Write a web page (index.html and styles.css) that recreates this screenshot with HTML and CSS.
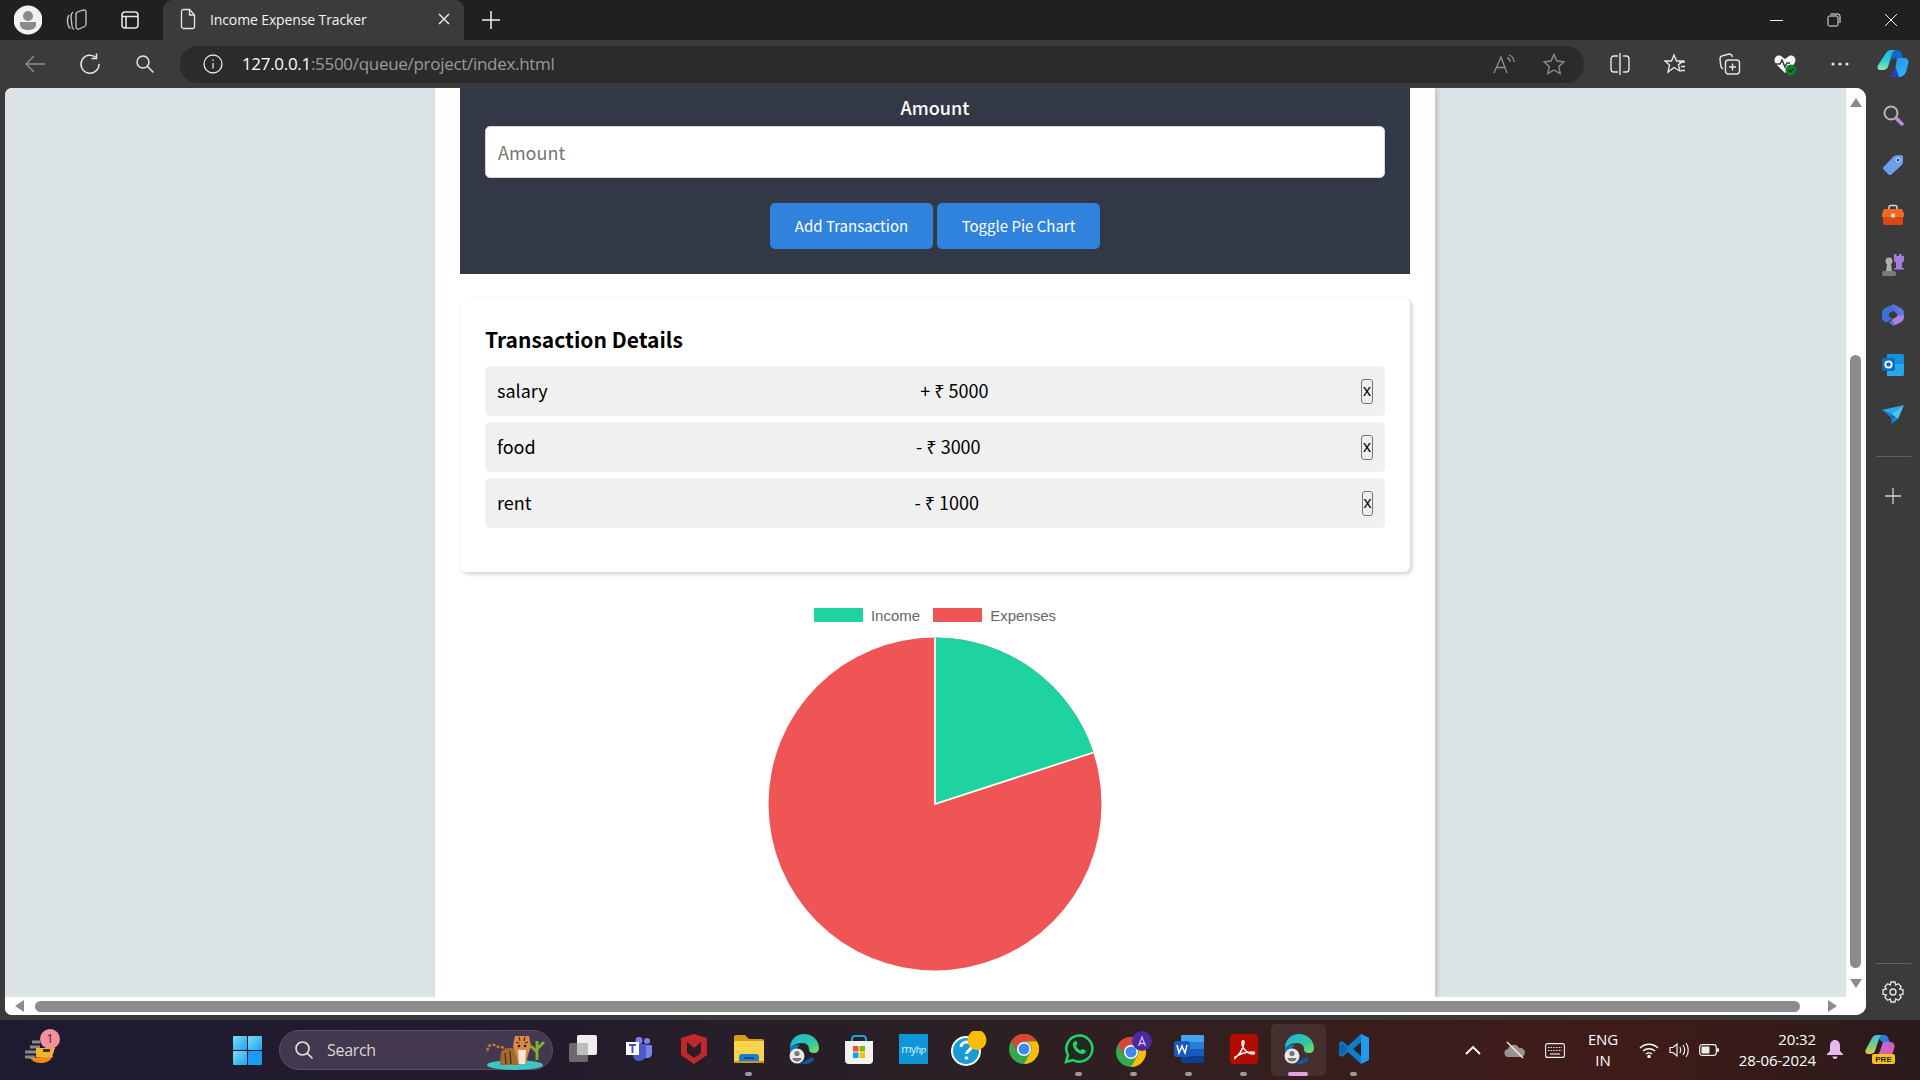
FILE: index.html
```html
<!DOCTYPE html>
<html lang="en">

<head>
    <meta charset="UTF-8">
    <title>Income Expense Tracker</title>
    <link rel="stylesheet" href="styles.css">
</head>

<body>

    <!-- Tab strip -->
    <div class="tabstrip">
        <div class="strip-btn avatar-slot">
            <svg width="28" height="30" viewBox="0 0 28 30"><circle cx="14" cy="15" r="14.500" fill="#f2f2f2"/><circle cx="14" cy="11" r="5" fill="#8a8a8a"/><path d="M6 17h16v3c0 3-4 5-8 5s-8-2-8-5z" fill="#8a8a8a"/></svg>
        </div>
        <div class="strip-btn workspaces">
            <svg width="24" height="24" viewBox="0 0 24 24" fill="none" stroke="#c8c8c8" stroke-width="1.300"><path d="M4 7c-1.500 2-2 4-1.500 7l1 4c.3 1 1 2 2 2.500"/><path d="M8 4C6.500 5 6 6.500 6 9l1 9c0 1.500 1 3 2 3.500"/><path d="M11 6c0-1 .5-1.500 1.500-2l6-2c1.500-.3 2.500.5 2.500 2v12c0 1-.5 2-1.500 2.500L14 21c-1.500.5-3-.5-3-2z"/></svg>
        </div>
        <div class="strip-btn vtabs">
            <svg width="20" height="20" viewBox="0 0 20 20" fill="none" stroke="#e4e4e4" stroke-width="1.600"><rect x="2" y="2" width="16" height="16" rx="3"/><path d="M2 6.500h16M6 6.500V18"/></svg>
        </div>
        <div class="tab">
            <svg width="18" height="22" viewBox="0 0 18 22" fill="none" stroke="#e6e6e6" stroke-width="1.300"><path d="M2.500 3.500a2 2 0 0 1 2-2h6l5 5.500v11.500a2 2 0 0 1-2 2h-9a2 2 0 0 1-2-2z"/><path d="M10.500 1.500v5.500h5"/></svg>
            <span class="tab-title">Income Expense Tracker</span>
            <svg class="tab-close" width="12" height="12" viewBox="0 0 12 12" stroke="#f0f0f0" stroke-width="1.400"><path d="M1 1l10 10M11 1L1 11"/></svg>
        </div>
        <svg class="new-tab" width="18" height="18" viewBox="0 0 18 18" stroke="#f0f0f0" stroke-width="1.500"><path d="M9 0v18M0 9h18"/></svg>
        <div class="window-btns">
            <svg width="14" height="14" viewBox="0 0 14 14" stroke="#f0f0f0" stroke-width="1"><path d="M0 7.500h13"/></svg>
            <svg width="14" height="14" viewBox="0 0 14 14" fill="none" stroke="#f0f0f0" stroke-width="1"><rect x="1" y="3" width="10" height="10" rx="1.500"/><path d="M3.500 1h7.500a2 2 0 0 1 2 2v7"/></svg>
            <svg width="14" height="14" viewBox="0 0 14 14" stroke="#f0f0f0" stroke-width="1"><path d="M1 1l12 12M13 1L1 13"/></svg>
        </div>
    </div>

    <!-- Address bar -->
    <div class="toolbar">
        <div class="tool-btn first">
            <svg width="22" height="20" viewBox="0 0 22 20" fill="none" stroke="#8b8b8b" stroke-width="1.500"><path d="M21 10H2M10 2l-8 8 8 8"/></svg>
        </div>
        <div class="tool-btn">
            <svg width="22" height="22" viewBox="0 0 22 22" fill="none" stroke="#e6e6e6" stroke-width="1.500"><path d="M17 4.500A9 9 0 1 0 20 11"/><path d="M17.500 0.500v5h-5"/></svg>
        </div>
        <div class="tool-btn">
            <svg width="20" height="20" viewBox="0 0 20 20" fill="none" stroke="#e6e6e6" stroke-width="1.500"><circle cx="8" cy="8" r="6"/><path d="M12.500 12.500l6 6"/></svg>
        </div>
        <div class="omnibox">
            <svg class="info" width="20" height="20" viewBox="0 0 20 20" fill="none" stroke="#e6e6e6" stroke-width="1.300"><circle cx="10" cy="10" r="9"/><path d="M10 9v5.500M10 5.500v1.500"/></svg>
            <span class="url"><span class="url-host">127.0.0.1</span>:5500/queue/project/index.html</span>
            <div class="omni-right">
                <svg width="22" height="22" viewBox="0 0 22 22" fill="none" stroke="#8e8e8e" stroke-width="1.300"><path d="M1 20L8 4l6 16M3.500 14.500h9"/><path d="M14 5c2 0 3 2 3 4M16 2c3 1 5 4 5 7"/></svg>
                <svg width="22" height="22" viewBox="0 0 22 22" fill="none" stroke="#8e8e8e" stroke-width="1.400"><path d="M11 1.500l3 6.500 7 .8-5.200 4.800 1.400 7L11 17l-6.200 3.600 1.400-7L1 8.800 8 8z"/></svg>
            </div>
        </div>
        <div class="tool-right">
            <div class="tool-icon"><svg width="20" height="22" viewBox="0 0 20 22" fill="none" stroke="#e6e6e6" stroke-width="1.400"><path d="M8 3H4a3 3 0 0 0-3 3v10a3 3 0 0 0 3 3h4M13 3h3a3 3 0 0 1 3 3v10a3 3 0 0 1-3 3h-3M10 0v22"/></svg></div>
            <div class="tool-icon"><svg width="22" height="22" viewBox="0 0 22 22" fill="none" stroke="#e6e6e6" stroke-width="1.400"><path d="M10 2l2.500 6H19l-4.500 3.800L16 18l-6-3.500L4 19l1.500-7L1 8h6.500z"/><path d="M15 9h6M17 13.500h4M17 17.500h4"/></svg></div>
            <div class="tool-icon"><svg width="22" height="22" viewBox="0 0 22 22" fill="none" stroke="#e6e6e6" stroke-width="1.400"><rect x="6.500" y="7" width="14" height="14" rx="3"/><path d="M13.500 10.500v7M10 14h7"/><path d="M4 16c-1.500-1-2-2-2.300-3.500L1 6c0-2 1-3 2.500-3.300L10 1c2 0 3 1 3.500 3"/></svg></div>
            <div class="tool-icon"><svg width="24" height="24" viewBox="0 0 24 24"><path d="M12 21L3 12c-4-5 1-10 5-8l4 3 4-3c4-2 9 3 5 8z" fill="#f4f4f4"/><path d="M1 12h6l2-4 3 7 2-4h3" fill="none" stroke="#3b3b3b" stroke-width="1.500"/><circle cx="18" cy="18" r="5.500" fill="#107c2c"/><path d="M15.500 18l2 2 3-3.500" fill="none" stroke="#0a3a16" stroke-width="1.300"/></svg></div>
            <div class="tool-icon"><svg width="18" height="4" viewBox="0 0 18 4" fill="#e6e6e6"><circle cx="2" cy="2" r="1.600"/><circle cx="9" cy="2" r="1.600"/><circle cx="16" cy="2" r="1.600"/></svg></div>
            <div class="tool-icon copilot-slot">
                <svg width="32" height="28" viewBox="0 0 32 28"><defs><linearGradient id="cpA" x1="0" y1="0" x2="0" y2="1"><stop offset="0" stop-color="#1fb6f0"/><stop offset=".55" stop-color="#2fd0d8"/><stop offset="1" stop-color="#8fe8a0"/></linearGradient><linearGradient id="cpB" x1="0" y1="0" x2="1" y2="1"><stop offset="0" stop-color="#1a8cf0"/><stop offset="1" stop-color="#38b8f8"/></linearGradient></defs><path d="M9 3c1-2 3-3 5-3h6c-3 0-4 2-5 4l-4 13c-1 2-3 3-5 3H3c-2 0-3-2-2.500-4z" fill="url(#cpA)"/><path d="M15 4c1-3 3-4 5-4 3 0 4 2 5 5l1 3h-8c-2 0-3 1-4 3z" fill="#1568c8"/><path d="M20 8h7c3 0 5 2 4.500 5l-2 7c-1 5-4 7-8 7H11c3 0 5-2 6-5l2-7z" fill="url(#cpB)"/><path d="M11 27c3 0 5-2 6-5l1.500-5 3.500 10z" fill="#2340c4"/></svg>
            </div>
        </div>
    </div>

    <div class="middle">
        <div class="viewport">
            <div class="view-top">
                <div class="page-area">
                    <div class="container">
                        <div class="form-panel">
                            <div class="form-label">Amount</div>
                            <input class="amount-input" type="text" placeholder="Amount">
                            <div class="form-actions">
                                <button class="btn">Add Transaction</button>
                                <button class="btn">Toggle Pie Chart</button>
                            </div>
                        </div>

                        <div class="details">
                            <h3>Transaction Details</h3>
                            <ul class="tx-list">
                                <li class="tx"><span>salary</span><span>+ ₹ 5000</span><button class="del">x</button></li>
                                <li class="tx"><span>food</span><span>- ₹ 3000</span><button class="del">x</button></li>
                                <li class="tx"><span>rent</span><span>- ₹ 1000</span><button class="del slim">x</button></li>
                            </ul>
                        </div>

                        <div class="chart">
                            <div class="legend">
                                <span class="swatch income"></span><span class="legend-text">Income</span>
                                <span class="swatch expenses"></span><span class="legend-text">Expenses</span>
                            </div>
                            <svg class="pie" width="336" height="336" viewBox="-168 -168 336 336">
                                <circle r="166.500" fill="#f05556"/>
                                <path d="M0 0V-166.500A166.500 166.500 0 0 1 158.400 -51.500Z" fill="#1fd3a1"/>
                                <path d="M0 -166.500V0L158.400 -51.500" fill="none" stroke="#fff" stroke-width="1.800"/>
                            </svg>
                        </div>
                    </div>
                </div>
                <div class="vscroll">
                    <span class="arrow-up"></span>
                    <div class="vthumb"></div>
                    <span class="arrow-down"></span>
                </div>
            </div>
            <div class="hscroll">
                <span class="arrow-left"></span>
                <div class="hthumb"></div>
                <span class="arrow-right"></span>
            </div>
        </div>

        <!-- Edge sidebar -->
        <div class="sidebar">
            <div class="side-slot"><svg width="22" height="22" viewBox="0 0 22 22"><circle cx="9" cy="9" r="6.500" fill="none" stroke="#b5b5b5" stroke-width="2"/><path d="M14 14l6 6" stroke="#b88de0" stroke-width="3.500" stroke-linecap="round"/></svg></div>
            <div class="side-slot"><svg width="22" height="22" viewBox="0 0 22 22"><path d="M1.500 13L12 2c1-.7 2-.8 3-.8h4.500c1 0 1.500.6 1.500 1.500V8c0 1-.3 2-1 2.700L9.500 20.500c-.8.8-2 .8-2.800 0L1.500 15.500c-.7-.7-.7-1.700 0-2.500z" fill="#6d9eeb"/><circle cx="16" cy="6" r="2" fill="#2b3a55" stroke="#dbe6fa"/></svg></div>
            <div class="side-slot"><svg width="22" height="22" viewBox="0 0 22 22"><path d="M7 6V3.500C7 2 8 1.500 9 1.500h4c1 0 2 .5 2 2V6" fill="none" stroke="#d8d8d8" stroke-width="1.500"/><path d="M2 5h18l2 5v3H0v-3z" fill="#f26a21"/><path d="M1 13h20v6c0 1-1 2-2 2H3c-1 0-2-1-2-2z" fill="#d9480f"/><rect x="9" y="9.500" width="4" height="4" rx="1" fill="#d8d8d8"/></svg></div>
            <div class="side-slot"><svg width="24" height="24" viewBox="0 0 24 24"><circle cx="8" cy="8" r="3.500" fill="#b0b0b0"/><path d="M6 11h4l1 7H5z" fill="#b0b0b0"/><rect x="1" y="18" width="14" height="5" rx="2" fill="#7b7b7b"/><path d="M13 1h2.500v2H18V1h2.500v2H23v5l-2 2v5h2v1.500H13V15h2v-5l-2-2z" fill="#a77ae0"/></svg></div>
            <div class="side-slot"><svg width="22" height="22" viewBox="0 0 22 22"><path d="M11 0l7 3.500c2.500 1 4 3 4 5.500v4c0 2.500-1.500 4.500-4 5.500L11 22l-4-4 5-3V7L7 4z" fill="#5f73e0"/><path d="M4 3.500L8 1.500l7 5.500-5 3v5l-5 3-1 .5C1.500 17.500 0 15.500 0 13V9c0-2.500 1.500-4.500 4-5.500z" fill="#3f6fd8"/><path d="M10 15l5-3 7-1v2c0 2.500-1.500 4.500-4 5.500L13 21z" fill="#b07fe0"/><path d="M11 7l4 2.500v3L11 15l-4-2.500v-3z" fill="#3b3b3b"/></svg></div>
            <div class="side-slot"><svg width="22" height="22" viewBox="0 0 22 22"><path d="M5 0h15a2 2 0 0 1 2 2v18a2 2 0 0 1-2 2H7l-2-3z" fill="#1490df"/><path d="M12 10h10v10a2 2 0 0 1-2 2H5v-6z" fill="#28a8ea"/><rect x="0" y="4" width="13" height="13" rx="2" fill="#0f6cbd"/><circle cx="6.500" cy="10.500" r="3.200" fill="none" stroke="#fff" stroke-width="1.800"/></svg></div>
            <div class="side-slot"><svg width="22" height="20" viewBox="0 0 22 20"><path d="M0 5l22-5-13 9z" fill="#2aa8f0"/><path d="M22 0l-13 9 7 5z" fill="#4cc2f7"/><path d="M9 9l3 2.500-3 7z" fill="#0f6cbd"/><path d="M0 5l9 4 1 4z" fill="#1b86d8"/><path d="M12 11.500l4 2.500-7 5z" fill="#1b86d8"/></svg></div>
            <div class="side-line"></div>
            <svg width="16" height="16" viewBox="0 0 16 16" stroke="#cfcfcf" stroke-width="1.300"><path d="M8 0v16M0 8h16"/></svg>
            <div class="side-bottom">
                <div class="side-line"></div>
                <svg width="22" height="22" viewBox="0 0 22 22" fill="none" stroke="#e6e6e6" stroke-width="1.300"><path d="M9 1h4l.7 3 2.600-1.300 2.800 2.900L17.700 8l3.300.8v4.400l-3.300.8 1.400 2.400-2.800 2.900-2.600-1.300L13 21H9l-.7-3-2.600 1.300-2.800-2.900L4.300 14 1 13.200V8.800L4.300 8 2.900 5.600l2.800-2.900L8.300 4z"/><circle cx="11" cy="11" r="3"/></svg>
            </div>
        </div>
    </div>

    <div class="toolbar-foot"></div>

    <!-- Windows taskbar -->
    <div class="taskbar">
        <div class="widget">
            <svg width="36" height="32" viewBox="0 0 36 32"><path d="M10 8h8M8 13h10M3 18h12M3 23h10" stroke="#8a8a8a" stroke-width="3" fill="none"/><path d="M8 24c3 4 7 5 12 5s9-3 11-7z" fill="#ef8a1d"/><path d="M14 14h19l-3 9H14z" fill="#f4b52c"/><rect x="21" y="15" width="7" height="3" fill="#3b3030"/></svg>
            <span class="badge">1</span>
        </div>
        <svg class="start" width="29" height="29" viewBox="0 0 29 29"><defs><linearGradient id="winA" x1="0" y1="0" x2="1" y2="1"><stop offset="0" stop-color="#7fdcf7"/><stop offset="1" stop-color="#1aa4f0"/></linearGradient></defs><rect width="14" height="14" rx="1" fill="url(#winA)"/><rect x="15" width="14" height="14" rx="1" fill="url(#winA)"/><rect y="15" width="14" height="14" rx="1" fill="url(#winA)"/><rect x="15" y="15" width="14" height="14" rx="1" fill="#1a9df0"/></svg>
        <div class="search">
            <svg width="20" height="20" viewBox="0 0 20 20" fill="none" stroke="#e8e8e8" stroke-width="1.600"><circle cx="8.500" cy="8.500" r="6.500"/><path d="M13 13l5.500 5.500"/></svg>
            <span class="search-text">Search</span>
            <svg class="tiger" width="64" height="38" viewBox="0 0 64 38"><ellipse cx="30" cy="33" rx="28" ry="5" fill="#3fc6c0"/><path d="M3 19c-2-5 4-8 8-5 3 2 7 0 10 3" fill="none" stroke="#c9762c" stroke-width="2.500" stroke-dasharray="3 1.500"/><path d="M16 20c4-4 10-5 15-3l3 16H15z" fill="#a5682f"/><path d="M20 21l1 11M25 19l1 13" stroke="#4a2c14" stroke-width="1.200"/><path d="M30 4h14l2 10-3 9-2 9h-8l-2-9-3-9z" fill="#d98a45"/><path d="M33 18h8l-1 14h-6z" fill="#f2e8dc"/><path d="M34 5l1 4M40 5l-1 4M31 10l3 1M43 10l-3 1" stroke="#4a2c14" stroke-width="1.200"/><circle cx="34" cy="14" r="1.300" fill="#222"/><circle cx="40" cy="14" r="1.300" fill="#222"/><path d="M52 28V9M52 20l-6-6M52 17l7-7" stroke="#7fb32d" stroke-width="2.800" fill="none"/></svg>
        </div>
        <div class="apps">
            <div class="app"><svg width="30" height="28" viewBox="0 0 30 28"><rect x="0" y="8" width="19" height="19" rx="2" fill="#6b6b6b"/><rect x="8" y="0" width="20" height="20" rx="2" fill="#efefef"/><rect x="8" y="8" width="11" height="12" fill="#bdbdbd"/></svg></div>
            <div class="app"><svg width="26" height="24" viewBox="0 0 26 24"><circle cx="21" cy="4" r="3" fill="#7b83eb"/><path d="M16 8h9c1 0 1 1 1 1v7c0 3-2 5-5 5s-5-2-5-5z" fill="#7b83eb"/><circle cx="13" cy="3.500" r="3.500" fill="#7b83eb"/><path d="M7 7h13v11c0 3-3 6-7 6s-6-3-6-6z" fill="#5059c9"/><rect x="0" y="5" width="13" height="13" fill="#fff"/><path d="M3 8h7M6.500 8v8" stroke="#4b53bc" stroke-width="2"/></svg></div>
            <div class="app"><svg width="26" height="30" viewBox="0 0 26 30"><path d="M0 4l13-4 13 4v17l-13 9-13-9z" fill="#c0282c"/><path d="M6 8l7 6 7-6v11l-7 5-7-5z" fill="#2a1e26"/></svg></div>
            <div class="app"><svg width="30" height="28" viewBox="0 0 30 28"><path d="M0 2a2 2 0 0 1 2-2h9l4 4h13a2 2 0 0 1 2 2v4H0z" fill="#d89c1c"/><rect y="6" width="30" height="22" rx="1" fill="#fbd44e"/><path d="M5 28v-6a3 3 0 0 1 3-3h14a3 3 0 0 1 3 3v6z" fill="#1a7fd0"/><rect x="10" y="22" width="10" height="2" fill="#0a4f8c"/><rect y="26" width="30" height="2" fill="#c9961a"/></svg><i class="dot"></i></div>
            <div class="app"><svg class="edge" width="30" height="30" viewBox="0 0 30 30"><defs><linearGradient id="edgeA" x1="0" y1="0" x2="1" y2="1"><stop offset="0" stop-color="#1bb4e8"/><stop offset=".6" stop-color="#33c6a0"/><stop offset="1" stop-color="#7fe05a"/></linearGradient></defs><path d="M1 14C1 6 7 0 15 0c8 0 15 6 15 14 0 3-2 5-5 5-4 0-5-2-5-4 0-3-2-6-7-6-6 0-10 3-12 5z" fill="url(#edgeA)"/><path d="M1 14c2-2 6-4 10-3-3 2-5 5-5 9 0 5 3 8 7 10C6 30 0 23 1 14z" fill="#1474c8"/><path d="M13 30c4 1 9-1 12-4l-2-3c-4 3-10 4-10 7z" fill="#0d5aa8"/><circle cx="8" cy="22" r="7.500" fill="#e9e9e9"/><circle cx="8" cy="19.500" r="2.600" fill="#777"/><path d="M3.500 24h9c0 2-2 3.500-4.500 3.500S3.500 26 3.500 24z" fill="#777"/></svg></div>
            <div class="app"><svg width="30" height="30" viewBox="0 0 30 30"><path d="M8 7V5a3 3 0 0 1 3-3h8a3 3 0 0 1 3 3v2" fill="none" stroke="#1ea0e8" stroke-width="2"/><path d="M1 7h28v19a4 4 0 0 1-4 4H5a4 4 0 0 1-4-4z" fill="#f2f2f2"/><rect x="9" y="12" width="5.500" height="5.500" fill="#f25022"/><rect x="15.500" y="12" width="5.500" height="5.500" fill="#7fba00"/><rect x="9" y="18.500" width="5.500" height="5.500" fill="#00a4ef"/><rect x="15.500" y="18.500" width="5.500" height="5.500" fill="#ffb900"/></svg></div>
            <div class="app"><div class="myhp">my<em>hp</em></div></div>
            <div class="app"><svg width="36" height="36" viewBox="0 0 36 36"><circle cx="15" cy="20" r="14" fill="#1a9ad6" stroke="#fff" stroke-width="2"/><path d="M10 16c0-3 2.500-5 5.500-5s5 2 5 4.500c0 3.500-5 4-5 7.500" fill="none" stroke="#fff" stroke-width="3"/><circle cx="15.500" cy="27" r="1.800" fill="#fff"/><ellipse cx="26" cy="9" rx="9.500" ry="10" fill="#fbbc05"/></svg></div>
            <div class="app"><svg width="30" height="30" viewBox="0 0 30 30"><circle cx="15" cy="15" r="15" fill="#34a853"/><path d="M15 0a15 15 0 0 1 13 7.500H15a7.500 7.500 0 0 0-6.500 11.300L2 7.500A15 15 0 0 1 15 0z" fill="#db4437"/><path d="M28 7.500A15 15 0 0 1 15 30l6.500-11.200A7.500 7.500 0 0 0 15 7.500z" fill="#fbbc05"/><circle cx="15" cy="15" r="7" fill="#fff"/><circle cx="15" cy="15" r="5.500" fill="#4285f4"/></svg></div>
            <div class="app"><svg width="30" height="30" viewBox="0 0 30 30"><path d="M2 28l2-7A13 13 0 1 1 9 26z" fill="#1f2a20" stroke="#25d366" stroke-width="2.500"/><path d="M10 8c-2 2-1 6 2 9s7 4 9 2c1-1 1-2 0-3l-3-1-1.500 1.500c-2-1-3.500-2.500-4.500-4.500L13.500 10l-1-3c-1-.500-1.500 0-2.500 1z" fill="#25d366"/></svg><i class="dot"></i></div>
            <div class="app"><svg width="36" height="36" viewBox="0 0 36 36"><g transform="translate(0 6)"><circle cx="15" cy="15" r="15" fill="#34a853"/><path d="M15 0a15 15 0 0 1 13 7.500H15a7.500 7.500 0 0 0-6.500 11.300L2 7.500A15 15 0 0 1 15 0z" fill="#db4437"/><path d="M28 7.500A15 15 0 0 1 15 30l6.500-11.200A7.500 7.500 0 0 0 15 7.500z" fill="#fbbc05"/><circle cx="15" cy="15" r="7" fill="#fff"/><circle cx="15" cy="15" r="5.500" fill="#4285f4"/></g><circle cx="26" cy="10" r="10" fill="#4a2a9c"/><path d="M22.500 15l3.500-9 3.500 9M23.500 12.500h5" fill="none" stroke="#c9b8f0" stroke-width="1.300"/></svg><i class="dot"></i></div>
            <div class="app"><svg width="30" height="28" viewBox="0 0 30 28"><rect x="7" y="0" width="23" height="7" rx="1" fill="#41a5ee"/><rect x="7" y="7" width="23" height="7" fill="#2b7cd3"/><rect x="7" y="14" width="23" height="7" fill="#185abd"/><rect x="7" y="21" width="23" height="7" rx="1" fill="#103f91"/><rect x="0" y="6" width="16" height="16" rx="2" fill="#185abd"/><path d="M3 10l2 8 3-7 3 7 2-8" fill="none" stroke="#fff" stroke-width="1.500"/></svg><i class="dot"></i></div>
            <div class="app"><svg width="28" height="30" viewBox="0 0 28 30"><rect width="28" height="30" rx="4" fill="#b30b00"/><path d="M5 23c4-1 8-8 9-14 .5-3-2-3-2 0 0 6 6 11 11 11 2 0 2-2 0-2-5 0-14 1-18 6z" fill="none" stroke="#fff" stroke-width="1.500"/></svg><i class="dot"></i></div>
            <div class="app current"><svg class="edge" width="30" height="30" viewBox="0 0 30 30"><path d="M1 14C1 6 7 0 15 0c8 0 15 6 15 14 0 3-2 5-5 5-4 0-5-2-5-4 0-3-2-6-7-6-6 0-10 3-12 5z" fill="url(#edgeA)"/><path d="M1 14c2-2 6-4 10-3-3 2-5 5-5 9 0 5 3 8 7 10C6 30 0 23 1 14z" fill="#1474c8"/><path d="M13 30c4 1 9-1 12-4l-2-3c-4 3-10 4-10 7z" fill="#0d5aa8"/><circle cx="8" cy="22" r="7.500" fill="#e9e9e9"/><circle cx="8" cy="19.500" r="2.600" fill="#777"/><path d="M3.500 24h9c0 2-2 3.500-4.500 3.500S3.500 26 3.500 24z" fill="#777"/></svg><i class="dot wide"></i></div>
            <div class="app"><svg width="30" height="30" viewBox="0 0 30 30"><path d="M22 0l8 4v22l-8 4-13-12-6 5-3-2v-12l3-2 6 5z" fill="#0f7ec8"/><path d="M22 8l-8 7 8 7z" fill="#2b2028"/><path d="M22 0l8 4v22l-8 4z" fill="#1f9cf0"/><path d="M3 9l6 6-6 6-3-2v-8z" fill="#0a66a8"/></svg><i class="dot"></i></div>
        </div>
        <div class="tray">
            <svg class="chev" width="16" height="10" viewBox="0 0 16 10" fill="none" stroke="#fff" stroke-width="1.800"><path d="M1 9l7-7 7 7"/></svg>
            <svg class="cloud" width="22" height="18" viewBox="0 0 22 18"><path d="M5 16a4 4 0 0 1-1-8 6 6 0 0 1 11-1 4.500 4.500 0 0 1 2.500 9z" fill="#9a9390"/><path d="M3 1l16 16" stroke="#eee" stroke-width="1.500"/></svg>
            <svg class="kbd" width="20" height="15" viewBox="0 0 20 15" fill="none" stroke="#eee" stroke-width="1.100"><rect x=".6" y=".6" width="18.800" height="13.800" rx="2"/><path d="M3 4.500h14M3 7.500h14" stroke-dasharray="1.500 1.200"/><path d="M5 11h10"/></svg>
            <div class="lang">ENG<br>IN</div>
            <svg class="wifi" width="20" height="16" viewBox="0 0 20 16" fill="none" stroke="#fff" stroke-width="1.400"><path d="M1 6c5-5 13-5 18 0M4 9c3.500-3 8.500-3 12 0M7 12c2-1.500 4-1.500 6 0"/><circle cx="10" cy="14.500" r="1" fill="#fff"/></svg>
            <svg class="sound" width="20" height="16" viewBox="0 0 20 16" fill="none" stroke="#eee" stroke-width="1.200"><path d="M1 5.500h3L8 2v12l-4-3.500H1z"/><path d="M11 5c1 2 1 4 0 6M14 3c2 3 2 7 0 10M17 1c3 4 3 10 0 14"/></svg>
            <svg class="batt" width="20" height="12" viewBox="0 0 20 12"><rect x=".7" y=".7" width="16.600" height="10.600" rx="2.500" fill="none" stroke="#eee" stroke-width="1.200"/><rect x="2.500" y="2.500" width="8" height="7" rx="1" fill="#eee"/><rect x="18" y="4" width="2" height="4" rx="1" fill="#eee"/></svg>
            <div class="clock">20:32<br>28-06-2024</div>
            <svg class="bell" width="16" height="20" viewBox="0 0 16 20"><path d="M8 0c3 0 5 2.500 5 6v5l3 3v1H0v-1l3-3V6c0-3.500 2-6 5-6z" fill="#e8b8ee"/><path d="M5.500 16.500h5c0 1.500-1 2.500-2.500 2.500s-2.500-1-2.500-2.500z" fill="#e8b8ee"/></svg>
            <svg class="pre" width="30" height="30" viewBox="0 0 30 30"><defs><linearGradient id="preA" x1="0" y1="0" x2="0" y2="1"><stop offset="0" stop-color="#3fc0e8"/><stop offset=".55" stop-color="#6cd080"/><stop offset="1" stop-color="#f5c43a"/></linearGradient><linearGradient id="preB" x1="0" y1="0" x2="1" y2="1"><stop offset="0" stop-color="#a86ae8"/><stop offset="1" stop-color="#f05aa0"/></linearGradient></defs><path d="M7 3c1-2 3-3 5-3h7c-3 0-4 2-5 4l-4 12c-1 2-2 3-5 3H3c-2 0-3-2-2.500-4z" fill="url(#preA)"/><path d="M14 4c1-3 3-4 5-4 3 0 4 2 5 5l1 2h-8z" fill="#2a7fd8"/><path d="M18 7h7c3 0 5 2 4.500 5L27 20H10c2 0 4-1 5-4z" fill="url(#preB)"/><rect x="7" y="19" width="23" height="10" rx="2" fill="#f5c21b"/><text x="18.500" y="27" class="pre-text">PRE</text></svg>
        </div>
    </div>

</body>

</html>
```

FILE: styles.css
```css
* {
    box-sizing: border-box;
}

html,
body {
    margin: 0;
    height: 100%;
    overflow: hidden;
}

body {
    width: 1920px;
    height: 1080px;
    display: flex;
    flex-direction: column;
    background: #3b3b3b;
    font-family: "Noto Sans CJK SC", "Noto Sans", sans-serif;
}

/* browser chrome */

.tabstrip {
    height: 40px;
    background: #202020;
    display: flex;
    align-items: center;
}

.strip-btn {
    display: flex;
    justify-content: center;
    align-items: center;
}

.avatar-slot {
    width: 28px;
    margin-left: 14px;
}

.workspaces {
    width: 24px;
    margin-left: 23px;
}

.vtabs {
    width: 20px;
    margin-left: 31px;
}

.tab {
    width: 301px;
    height: 40px;
    margin-left: 23px;
    background: #3b3b3b;
    border-radius: 9px 9px 0 0;
    display: flex;
    align-items: center;
    padding: 0 14px 2px 16px;
    color: #f2f2f2;
}

.tab-title {
    margin-left: 13px;
    font-family: "Open Sans", sans-serif;
    font-size: 14px;
    letter-spacing: -0.12px;
}

.tab-close {
    margin-left: auto;
}

.new-tab {
    margin-left: 18px;
}

.window-btns {
    margin-left: auto;
    margin-right: 22px;
    display: flex;
    gap: 43px;
}

.toolbar {
    height: 48px;
    display: flex;
    align-items: center;
}

.tool-btn {
    width: 55px;
    display: flex;
    justify-content: center;
}

.tool-btn.first {
    margin-left: 8px;
}

.omnibox {
    width: 1405px;
    height: 37px;
    margin-left: 7px;
    background: #2b2b2b;
    border-radius: 18px;
    display: flex;
    align-items: center;
    padding-left: 23px;
}

.info {
    flex: none;
}

.url {
    margin-left: 19px;
    margin-bottom: 2px;
    font-family: "Open Sans", sans-serif;
    font-size: 17px;
    letter-spacing: -0.3px;
    color: #9a9a9a;
}

.url-host {
    color: #fff;
}

.omni-right {
    margin-left: auto;
    margin-right: 19px;
    display: flex;
    gap: 28px;
}

.tool-right {
    display: flex;
    margin-left: 8px;
    align-items: center;
}

.tool-icon {
    width: 55px;
    display: flex;
    justify-content: center;
}

.copilot-slot {
    margin-left: -2px;
}

.middle {
    height: 927px;
    display: flex;
}

.viewport {
    width: 1861px;
    margin-left: 5px;
    border-radius: 7px 10px 10px 7px;
    overflow: hidden;
    display: flex;
    flex-direction: column;
    background: #fff;
}

.view-top {
    height: 909px;
    display: flex;
}

.page-area {
    width: 1841px;
    background: #dde4e7;
    overflow: hidden;
}

/* scrollbars */

.vscroll {
    width: 20px;
    background: #fff;
    display: flex;
    flex-direction: column;
    align-items: center;
    padding-top: 10px;
}

.arrow-up,
.arrow-down {
    width: 0;
    height: 0;
    border-left: 6px solid transparent;
    border-right: 6px solid transparent;
}

.arrow-up {
    border-bottom: 9px solid #8c8c8c;
}

.arrow-down {
    margin-top: 11px;
    border-top: 9px solid #8c8c8c;
}

.vthumb {
    width: 11px;
    height: 613px;
    margin-top: 248px;
    margin-right: 1px;
    background: #8c8c8c;
    border-radius: 6px;
}

.hscroll {
    height: 18px;
    background: #fff;
    display: flex;
    align-items: center;
    padding-left: 10px;
}

.arrow-left,
.arrow-right {
    width: 0;
    height: 0;
    border-top: 6px solid transparent;
    border-bottom: 6px solid transparent;
}

.arrow-left {
    border-right: 9px solid #8c8c8c;
}

.arrow-right {
    margin-left: 28px;
    border-left: 9px solid #8c8c8c;
}

.hthumb {
    width: 1765px;
    height: 11px;
    margin-left: 11px;
    background: #8c8c8c;
    border-radius: 6px;
}

/* page */

.container {
    width: 1000px;
    height: 100%;
    margin-left: 430px;
    padding: 0 25px;
    background: #fff;
    box-shadow: 2px 0 5px rgba(0, 0, 0, 0.18);
}

.form-panel {
    height: 186px;
    background: #323845;
    padding: 8px 25px 0;
    text-align: center;
}

.form-label {
    height: 30px;
    line-height: 22px;
    color: #fff;
    font-size: 18px;
    font-weight: 500;
}

.amount-input {
    display: block;
    width: 100%;
    height: 52px;
    padding: 0 12px;
    border: 1px solid #d5d5d5;
    border-radius: 5px;
    background: #fff;
    font-family: inherit;
    font-size: 18px;
    outline: none;
}

.amount-input::placeholder {
    color: #757575;
}

.form-actions {
    margin-top: 25px;
    display: flex;
    justify-content: center;
    gap: 4px;
}

.btn {
    width: 163px;
    height: 46px;
    padding: 0 0 2px;
    border: 0;
    border-radius: 5px;
    background: #2f83dd;
    color: #fff;
    font-family: inherit;
    font-size: 15px;
    font-weight: 400;
}

.details {
    height: 274px;
    margin-top: 24px;
    padding: 27px 25px 0;
    border-radius: 6px;
    background: #fff;
    box-shadow: 2px 2px 4px rgba(0, 0, 0, 0.2);
}

.details h3 {
    margin: 0 0 12px;
    height: 29px;
    line-height: 29px;
    font-size: 21px;
    font-weight: 700;
    color: #000;
}

.tx-list {
    list-style: none;
    margin: 0;
    padding: 0;
}

.tx {
    height: 50px;
    margin-bottom: 6px;
    padding: 0 12px;
    background: #f0f0f0;
    border-radius: 5px;
    display: flex;
    justify-content: space-between;
    align-items: center;
    font-size: 18px;
    color: #000;
}

.tx span {
    padding-bottom: 2px;
}

.del {
    width: 12px;
    height: 25px;
    padding: 0;
    border: 1px solid #767676;
    border-radius: 3px;
    background: #efefef;
    font-family: "Liberation Sans", sans-serif;
    font-size: 16px;
    color: #000;
}

.del.slim {
    width: 11px;
}

.chart {
    display: flex;
    flex-direction: column;
    align-items: center;
}

.legend {
    height: 20px;
    margin-top: 33px;
    display: flex;
    align-items: center;
    font-family: "Liberation Sans", sans-serif;
    font-size: 15px;
    color: #666;
}

.swatch {
    width: 49px;
    height: 14px;
    margin-right: 8px;
}

.swatch.income {
    background: #1fd3a1;
}

.swatch.expenses {
    background: #f05556;
}

.legend-text {
    margin-right: 13px;
}

.legend-text:last-child {
    margin-right: 0;
}

.pie {
    margin-top: 11px;
    display: block;
}

/* sidebar */

.sidebar {
    width: 54px;
    display: flex;
    flex-direction: column;
    align-items: center;
    padding-top: 2px;
}

.side-slot {
    height: 50px;
    flex: none;
    display: flex;
    align-items: center;
}

.side-line {
    width: 35px;
    height: 1px;
    background: #5f5f5f;
    margin: 16px 0 31px;
}

.side-bottom {
    margin-top: auto;
    margin-bottom: 12px;
    display: flex;
    flex-direction: column;
    align-items: center;
}

.side-bottom .side-line {
    margin: 0 0 17px;
}

.toolbar-foot {
    height: 5px;
    background: #3b3b3b;
}

/* taskbar */

.taskbar {
    height: 60px;
    background: linear-gradient(90deg, #1e1a30 0%, #241c2c 30%, #2b2024 50%, #3c1d1c 75%, #401c18 85%, #2a1a1c 100%);
    display: flex;
    align-items: center;
    color: #fff;
    font-family: "Open Sans", sans-serif;
}

.widget {
    width: 36px;
    margin-left: 22px;
    position: relative;
    display: flex;
}

.badge {
    position: absolute;
    top: -5px;
    right: -2px;
    width: 20px;
    height: 20px;
    border-radius: 50%;
    background: #f88f9d;
    color: #222;
    font-size: 12px;
    line-height: 20px;
    text-align: center;
}

.start {
    margin-left: 175px;
}

.search {
    width: 274px;
    height: 40px;
    margin-left: 17px;
    padding-left: 14px;
    background: #43384f;
    border: 1px solid #5a5064;
    border-radius: 20px;
    display: flex;
    align-items: center;
}

.search-text {
    margin-left: 13px;
    font-size: 16px;
    letter-spacing: -0.3px;
    color: #d8d8d8;
}

.tiger {
    margin-left: auto;
    margin-right: 3px;
    margin-top: 1px;
}

.apps {
    margin-left: 3px;
    display: flex;
}

.app {
    width: 55px;
    height: 52px;
    position: relative;
    display: flex;
    justify-content: center;
    align-items: center;
    padding-bottom: 2px;
}

.app.current {
    background: rgba(255, 255, 255, 0.08);
    border-radius: 5px;
}

.dot {
    position: absolute;
    bottom: 0;
    left: 24px;
    width: 7px;
    height: 4px;
    border-radius: 2px;
    background: #9a9a9a;
}

.dot.wide {
    left: 17px;
    width: 20px;
    background: #e0a3e6;
}

.myhp {
    width: 29px;
    height: 30px;
    background: #0f96d6;
    color: #d8f0fa;
    font-size: 11px;
    line-height: 30px;
    text-align: center;
    letter-spacing: -0.5px;
}

.myhp em {
    font-family: "Liberation Serif", serif;
}

.tray {
    margin-left: 84px;
    display: flex;
    align-items: center;
}

.cloud {
    margin-left: 23px;
}

.kbd {
    margin-left: 19px;
}

.lang {
    width: 50px;
    margin-left: 13px;
    text-align: center;
    font-size: 15px;
    line-height: 21px;
    letter-spacing: -0.1px;
}

.wifi {
    margin-left: 11px;
}

.sound {
    margin-left: 10px;
}

.batt {
    margin-left: 10px;
}

.clock {
    width: 89px;
    margin-left: 8px;
    text-align: right;
    font-size: 15px;
    line-height: 21px;
    letter-spacing: -0.1px;
    white-space: nowrap;
}

.bell {
    margin-left: 11px;
}

.pre {
    margin-left: 22px;
}

.pre-text {
    font-family: "Liberation Sans", sans-serif;
    font-size: 8px;
    font-weight: 700;
    text-anchor: middle;
    fill: #222;
}
```
